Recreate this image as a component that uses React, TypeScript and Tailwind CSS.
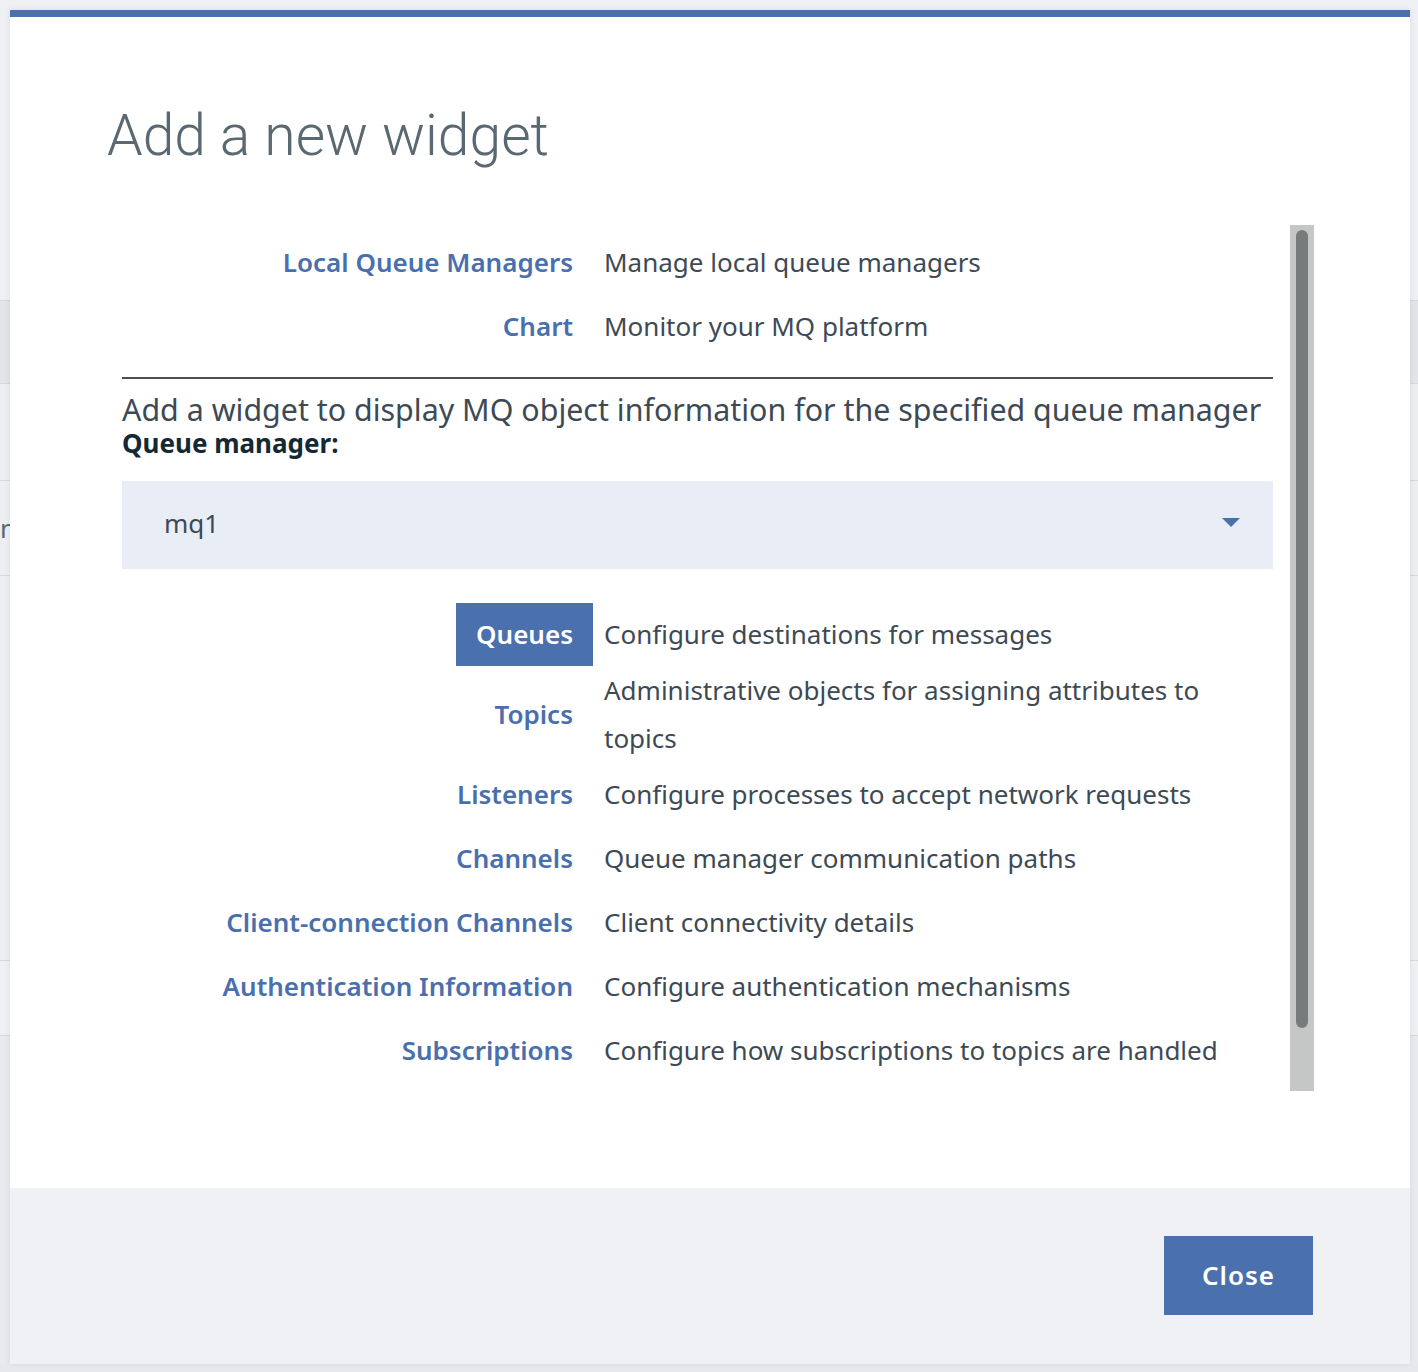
import React from "react";

const font = { fontFamily: "'Noto Sans', Roboto, sans-serif" };
const titleFont = { fontFamily: "Roboto, 'Noto Sans', sans-serif" };

type Item = { label: string; desc: string; active?: boolean };

const top: Item[] = [
  { label: "Local Queue Managers", desc: "Manage local queue managers" },
  { label: "Chart", desc: "Monitor your MQ platform" },
];

const objs: Item[] = [
  { label: "Queues", desc: "Configure destinations for messages", active: true },
  { label: "Topics", desc: "Administrative objects for assigning attributes to topics" },
  { label: "Listeners", desc: "Configure processes to accept network requests" },
  { label: "Channels", desc: "Queue manager communication paths" },
  { label: "Client-connection Channels", desc: "Client connectivity details" },
  { label: "Authentication Information", desc: "Configure authentication mechanisms" },
  { label: "Subscriptions", desc: "Configure how subscriptions to topics are handled" },
];

function Row({ item }: { item: Item }) {
  return (
    <div className="grid grid-cols-[471px_1fr] min-h-[64px] items-center">
      <div className="flex justify-end h-full items-center">
        <span
          className={
            item.active
              ? "inline-flex items-center h-[63px] mt-[1px] px-5 bg-[#4a70ad] text-white text-[26px] font-semibold"
              : "inline-flex items-center px-5 text-[#4a6fae] text-[26px] font-semibold"
          }
        >
          {item.label}
        </span>
      </div>
      <div className="pl-[11px] text-[26px] leading-[48px] text-[#3d4a55] pr-[40px]">{item.desc}</div>
    </div>
  );
}

export default function App() {
  return (
    <div className="relative w-[1418px] h-[1372px] bg-[#e7e8ec] overflow-hidden" style={font}>
      {/* background page */}
      <div className="flex flex-col w-full">
        <div className="h-[300px] bg-[#eef0f3]" />
        <div className="h-[83px] bg-[#e2e4e9] border-t border-[#d6d8dd]" />
        <div className="h-[97px] border-t border-[#d6d8dd] bg-[#eceef1]" />
        <div className="h-[95px] border-t border-[#d6d8dd] bg-[#eceef1] flex items-center">
          <span className="text-[26px] text-[#5a6872]">n</span>
        </div>
        <div className="h-[385px] border-t border-[#d6d8dd] bg-[#eceef1]" />
        <div className="h-[75px] border-t border-[#d6d8dd] bg-[#eff0f3]" />
        <div className="h-[330px] border-t border-[#d6d8dd] bg-[#e9eaee]" />
      </div>

      {/* modal */}
      <div className="absolute left-[10px] top-[10px] w-[1400px] h-[1354px] flex flex-col shadow-[0_0_6px_rgba(0,0,0,0.08)]">
        <div className="h-[7px] bg-[#4a70ad]" />
        <div className="h-[1171px] bg-white flex flex-col">
          <h1
            className="pl-[97px] mt-[83px] text-[57px] leading-[72px] font-light text-[#5a6872]"
            style={titleFont}
          >
            Add a new widget
          </h1>
          <div className="ml-[112px] mt-[53px] flex">
            <div className="w-[1151px] pt-[5px]">
              {top.map((t) => (
                <Row key={t.label} item={t} />
              ))}
              <div className="mt-[19px] h-[2px] bg-[#4d4f52]" />
              <div className="mt-[14px] text-[30.4px] leading-[34px] text-[#3d4a55] whitespace-nowrap">
                Add a widget to display MQ object information for the specified queue manager
              </div>
              <div className="text-[26px] leading-[32px] font-bold text-[#152935]">Queue manager:</div>
              <div className="mt-[22px] h-[88px] bg-[#e9edf5] flex items-center justify-between pl-[42px] pr-[33px]">
                <span className="text-[26px] text-[#3d4a55] -mt-[4px]">mq1</span>
                <svg width="18" height="9" viewBox="0 0 18 9" className="-mt-[6px]">
                  <path d="M0 0 L18 0 L9 9 Z" fill="#4a70ad" />
                </svg>
              </div>
              <div className="mt-[33px]">
                {objs.map((t) => (
                  <Row key={t.label} item={t} />
                ))}
              </div>
            </div>
            <div className="ml-[17px] w-[24px] h-[866px] bg-[#c5c6c6] flex justify-center">
              <div className="mt-[5px] w-[12px] h-[798px] rounded-full bg-[#787b7c]" />
            </div>
          </div>
        </div>
        <div className="flex-1 bg-[#f0f1f5] flex justify-end items-start pr-[97px] pt-[48px]">
          <button className="w-[149px] h-[79px] bg-[#4a70ad] text-white text-[26px] font-semibold tracking-[1px]">
            Close
          </button>
        </div>
      </div>
    </div>
  );
}
